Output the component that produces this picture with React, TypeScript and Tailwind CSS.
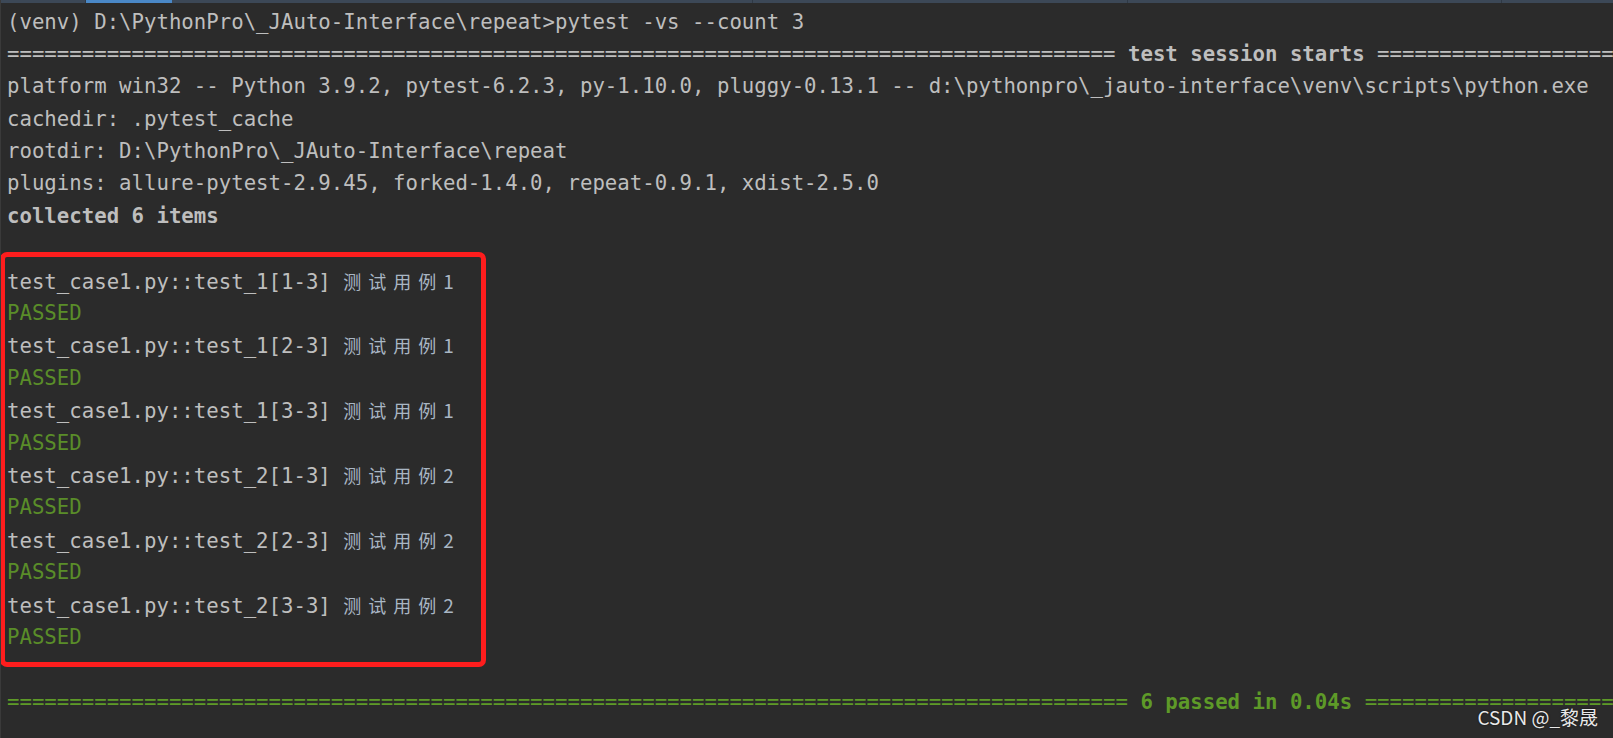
import React from "react";

const mono = { fontFamily: '"DejaVu Sans Mono", "Liberation Mono", monospace' };

const header = "=".repeat(89);
const footer = "=".repeat(90);

const cases = [
  { name: "test_case1.py::test_1[1-3]", n: "1" },
  { name: "test_case1.py::test_1[2-3]", n: "1" },
  { name: "test_case1.py::test_1[3-3]", n: "1" },
  { name: "test_case1.py::test_2[1-3]", n: "2" },
  { name: "test_case1.py::test_2[2-3]", n: "2" },
  { name: "test_case1.py::test_2[3-3]", n: "2" },
];

const Line = ({ children, className = "" }: { children?: React.ReactNode; className?: string }) => (
  <div className={`h-[32.4px] leading-[32.4px] whitespace-pre ${className}`}>{children}</div>
);

const CaseLabel = ({ n }: { n: string }) => (
  <span className="font-['Noto_Sans_CJK_SC',sans-serif] text-[18px] text-[#a9b6c4] tracking-[7px]">
    测试用例<span className="text-[19px]">{n}</span>
  </span>
);

const TabStrip = () => (
  <div className="flex h-[3px] bg-[#3c4857] shrink-0">
    <div className="w-[85px] border-r border-[#2f3945]" />
    <div className="w-[86px] bg-[#4a88c7]" />
    <div className="w-[581px] border-r border-[#2f3945]" />
    <div className="w-[375px] border-r border-[#2f3945]" />
    <div className="w-[374px] border-r border-[#2f3945]" />
    <div className="flex-1" />
  </div>
);

export default function App() {
  return (
    <div className="relative w-full h-[738px] overflow-hidden bg-[#2b2b2b] flex flex-col border-l border-[#3a3a3a]">
      <TabStrip />

      {/* console output */}
      <div className="pl-[6px] pt-[2.5px] text-[20.7px] text-[#bebebe]" style={mono}>
        <Line>(venv) D:\PythonPro\_JAuto-Interface\repeat&gt;pytest -vs --count 3</Line>
        <Line>
          {header} <span className="font-bold">test session starts</span> {header}
        </Line>
        <Line>
          platform win32 -- Python 3.9.2, pytest-6.2.3, py-1.10.0, pluggy-0.13.1 -- d:\pythonpro\_jauto-interface\venv\scripts\python.exe
        </Line>
        <Line>cachedir: .pytest_cache</Line>
        <Line>rootdir: D:\PythonPro\_JAuto-Interface\repeat</Line>
        <Line>plugins: allure-pytest-2.9.45, forked-1.4.0, repeat-0.9.1, xdist-2.5.0</Line>
        <Line className="font-bold">collected 6 items</Line>
        <Line />

        <div className="relative">
          {cases.map((c) => (
            <React.Fragment key={c.name}>
              <Line>
                {c.name} <CaseLabel n={c.n} />
              </Line>
              <Line className="text-[#5a8d29]">PASSED</Line>
            </React.Fragment>
          ))}
          {/* annotation box */}
          <div className="absolute left-[-7px] top-[-13px] bottom-[-14px] w-[486px] border-[5px] border-[#fe1d1d] rounded-[7px] pointer-events-none" />
        </div>

        <Line />
        <Line className="text-[#5e9a28]">
          {footer} <span className="font-bold">6 passed in 0.04s</span> {footer}
        </Line>
      </div>

      {/* watermark */}
      <div className="absolute right-[15px] bottom-[7px] font-['Noto_Sans_CJK_SC',sans-serif] text-[19px] text-[#e9e9e9] [text-shadow:0_0_2px_rgba(0,0,0,0.8)]">
        CSDN @_黎晟
      </div>
    </div>
  );
}
